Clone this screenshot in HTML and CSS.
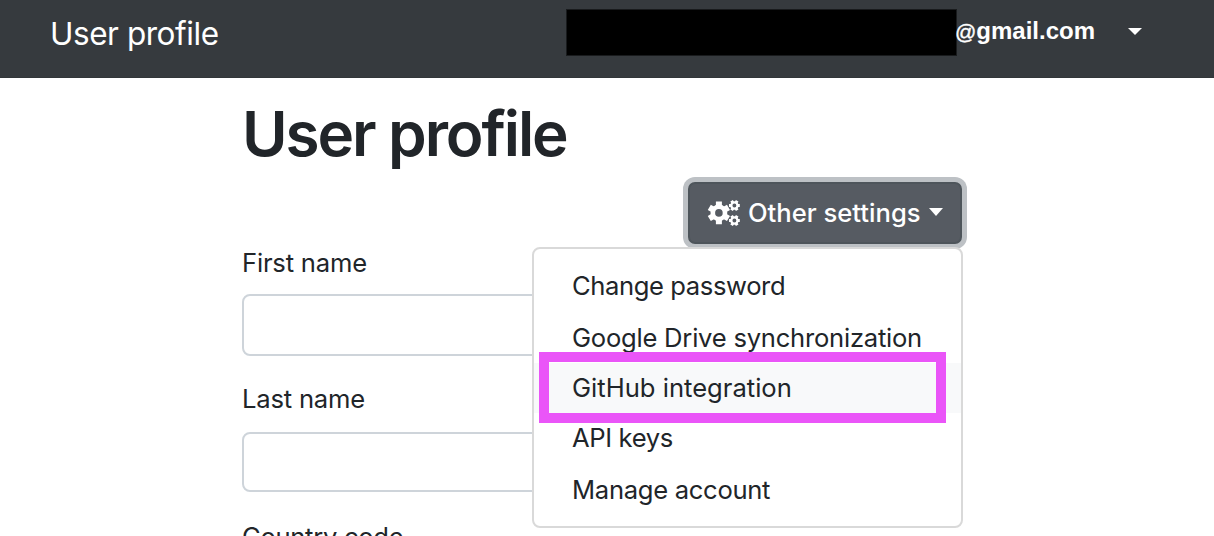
FILE: index.html
```html
<!DOCTYPE html>
<html lang="en">
<head>
<meta charset="utf-8">
<title>User profile</title>
<link rel="stylesheet" href="styles.css">
</head>
<body>
<header class="navbar">
  <a class="brand">User profile</a>
  <div class="account">
    <span class="redacted"></span>
    <span class="email"><span class="at">@</span>gmail.com</span>
    <svg class="caret" width="14" height="7" viewBox="0 0 14 7"><path d="M0 0h14L7 7z" fill="currentColor"/></svg>
  </div>
</header>
<main class="content">
  <h1 class="title">User profile</h1>
  <div class="toolbar">
    <div class="dropdown">
      <button class="btn">
        <svg class="cogs" width="34" height="28" viewBox="0 0 34 28" fill="none" stroke="currentColor">
          <g stroke-linejoin="round">
            <circle cx="11.9" cy="13.9" r="6.1" stroke-width="4.6"/>
            <path stroke-width="6" d="M11.9 8.5V2.6M11.9 19.3v5.9M7.2 11.2l-4.9-2.9M16.6 16.6l4.9 2.9M7.2 16.6l-4.9 2.9M16.6 11.2l4.9-2.9"/>
          </g>
          <g>
            <circle cx="27.4" cy="6.5" r="3.1" stroke-width="2.3"/>
            <path stroke-width="3" d="M24.2 6.5h-2.2M30.6 6.5h2.2M25.8 3.7l-1.2-2M29 3.7l1.2-2M25.8 9.3l-1.2 2M29 9.3l1.2 2"/>
          </g>
          <g>
            <circle cx="27.4" cy="21.5" r="3.1" stroke-width="2.3"/>
            <path stroke-width="3" d="M24.2 21.5h-2.2M30.6 21.5h2.2M25.8 18.7l-1.2-2M29 18.7l1.2-2M25.8 24.3l-1.2 2M29 24.3l1.2 2"/>
          </g>
        </svg>
        <span class="btn-label">Other settings</span>
        <svg class="btn-caret" width="14" height="8" viewBox="0 0 14 8"><path d="M0 0h14L7 8z" fill="currentColor"/></svg>
      </button>
      <div class="menu">
        <a class="item password">Change password</a>
        <a class="item drive">Google Drive synchronization</a>
        <a class="item active">GitHub integration</a>
        <a class="item keys">API keys</a>
        <a class="item manage">Manage account</a>
        <div class="highlight"></div>
      </div>
    </div>
  </div>
  <form class="form">
    <div class="group"><label class="label">First name</label><input class="input"></div>
    <div class="group last"><label class="label">Last name</label><input class="input"></div>
    <div class="group country"><label class="label">Country code</label></div>
  </form>
</main>
</body>
</html>
```
FILE: styles.css
```css
* { box-sizing: border-box; }
html { overflow: hidden; }
body {
  margin: 0;
  height: 536px;
  overflow: hidden;
  background: #fff;
  color: #212529;
  font-family: Inter, "Liberation Sans", sans-serif;
  font-size: 25.6px;
  font-weight: 430;
}
.navbar {
  display: flex;
  justify-content: space-between;
  height: 78px;
  padding-left: 50px;
  padding-right: 72px;
  background: #363a3e;
  border-bottom: 1px solid #323639;
  color: #fff;
}
.brand { font-size: 31.5px; line-height: 67px; letter-spacing: -0.45px; }
.account { display: flex; height: 62px; }
.redacted {
  width: 391px;
  height: 47px;
  margin-top: 9px;
  background: #000;
  border: 1px solid #191b1d;
}
.email {
  width: 138px;
  margin-left: -1px;
  font: bold 24px/62px "Liberation Sans", Arial, sans-serif;
  white-space: nowrap;
}
.at {
  margin-left: -1px;
  font-size: 21px;
  font-weight: 400;
  -webkit-text-stroke: 0.4px #fff;
}
.caret { margin: 28px 0 0 34px; }
.content { width: 720px; height: 458px; margin-left: 242px; }
.title {
  height: 104px;
  margin: 0;
  font-size: 62px;
  font-weight: 600;
  line-height: 111px;
  letter-spacing: -2.1px;
}
.toolbar { display: flex; justify-content: flex-end; height: 62px; }
.dropdown { position: relative; }
.btn {
  display: flex;
  align-items: center;
  width: 274px;
  height: 62px;
  padding: 0 0 0 17px;
  border: 2px solid #4e555b;
  border-radius: 7px;
  background: #565b62;
  box-shadow: 0 0 0 5px #bdc1c5;
  color: #fff;
  font: 450 25.6px Inter, sans-serif;
  white-space: nowrap;
}
.cogs { margin-right: 7px; }
.btn-label { margin-top: -2px; }
.btn-caret { margin: -3px 0 0 8px; }
.menu {
  position: absolute;
  top: 65px;
  right: -1px;
  width: 431px;
  height: 281px;
  padding: 12px 0;
  border: 2px solid #d9d9d9;
  border-radius: 8px;
  background: #fff;
}
.item { display: block; height: 51px; padding-left: 38px; line-height: 51px; white-space: nowrap; }
.password { line-height: 49px; letter-spacing: -0.4px; }
.drive { letter-spacing: -0.24px; }
.active { height: 50px; line-height: 50px; letter-spacing: 0; background: #f8f9fa; }
.keys { line-height: 49px; letter-spacing: -0.38px; }
.manage { letter-spacing: -0.3px; }
.highlight {
  position: absolute;
  left: 5px;
  top: 103px;
  width: 407px;
  height: 71px;
  border: 10px solid #ea55f8;
}
.form { display: grid; grid-template-rows: 138px 136px 18px; }
.label { display: block; height: 50px; line-height: 38px; letter-spacing: -0.2px; }
.input {
  display: block;
  width: 720px;
  height: 62px;
  border: 2px solid #ced4da;
  border-radius: 8px;
  background: #fff;
}
.last .label { line-height: 34px; }
.last .input { height: 60px; }
.country { height: 18px; overflow: hidden; }
.country .label { letter-spacing: -0.3px; }
```
